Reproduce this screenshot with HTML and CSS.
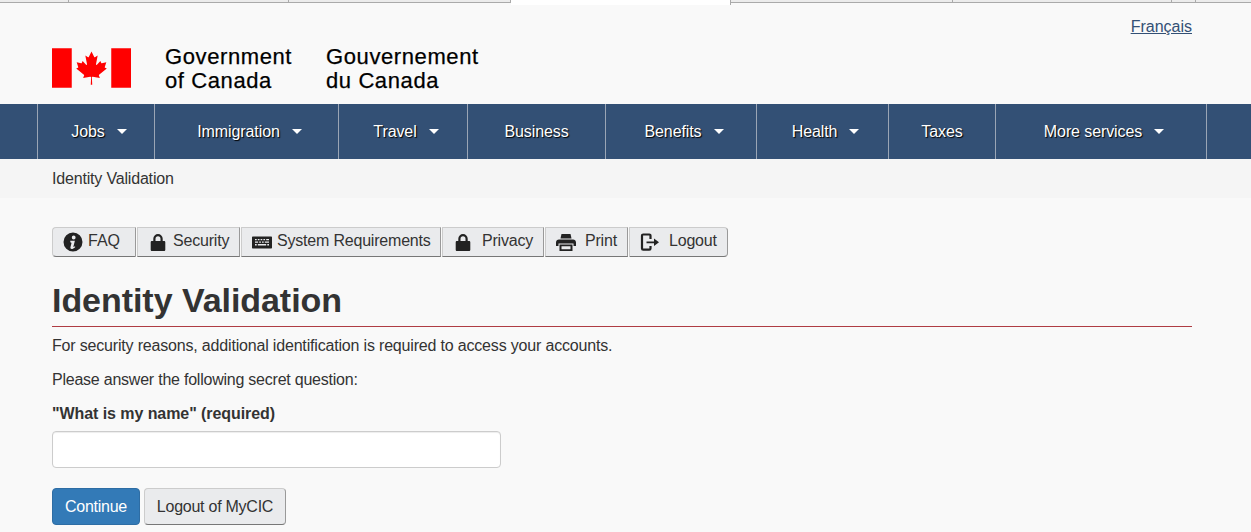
FILE: index.html
```html
<!DOCTYPE html>
<html lang="en">

<head>
    <meta charset="UTF-8">
    <meta name="viewport" content="width=device-width, initial-scale=1.0">
    <title>Identity Validation</title>
    <link rel="stylesheet" href="styles.css">
</head>

<body>
    <div class="tab-strip">
        <span class="strip-cell"></span>
        <span class="strip-cell"></span>
        <span class="strip-cell"></span>
        <span class="strip-active"></span>
        <span class="strip-cell"></span>
        <span class="strip-cell"></span>
        <span class="strip-cell"></span>
        <span class="strip-cell"></span>
    </div>

    <header class="site-header">
        <div class="lang-row"><a href="#">Français</a></div>
        <div class="brand">
            <svg class="flag" viewBox="0 0 9600 4800" aria-hidden="true">
                <path fill="#f00" d="M0 0h2400v4800H0zM7200 0h2400v4800H7200z" />
                <path fill="#f00" d="m4890 4430-45-863a95 95 0 0 1 111-98l859 151-116-320a65 65 0 0 1 20-73l941-762-212-99a65 65 0 0 1-34-79l186-572-542 115a65 65 0 0 1-73-38l-105-247-423 454a65 65 0 0 1-111-57l204-1052-327 189a65 65 0 0 1-91-27l-332-652-332 652a65 65 0 0 1-91 27l-327-189 204 1052a65 65 0 0 1-111 57l-423-454-105 247a65 65 0 0 1-73 38l-542-115 186 572a65 65 0 0 1-34 79l-212 99 941 762a65 65 0 0 1 20 73l-116 320 859-151a95 95 0 0 1 111 98l-45 863z" />
            </svg>
            <div class="brand-name brand-en">Government<br>of Canada</div>
            <div class="brand-name">Gouvernement<br>du Canada</div>
        </div>
    </header>

    <nav class="main-nav">
        <a class="nav-item nav-jobs" href="#">Jobs<span class="caret"></span></a>
        <a class="nav-item nav-immigration" href="#">Immigration<span class="caret"></span></a>
        <a class="nav-item nav-travel" href="#">Travel<span class="caret"></span></a>
        <a class="nav-item nav-business" href="#">Business</a>
        <a class="nav-item nav-benefits" href="#">Benefits<span class="caret"></span></a>
        <a class="nav-item nav-health" href="#">Health<span class="caret"></span></a>
        <a class="nav-item nav-taxes" href="#">Taxes</a>
        <a class="nav-item nav-more" href="#">More services<span class="caret"></span></a>
    </nav>

    <div class="breadcrumb">Identity Validation</div>

    <main class="content">
        <div class="toolbar">
            <a class="tool tool-faq" href="#">
                <svg class="icon" viewBox="0 0 20 20" aria-hidden="true">
                    <path fill-rule="evenodd" d="M10 .5a9.500 9.500 0 1 0 0 19 9.500 9.500 0 0 0 0-19zM10.700 3.600a1.900 1.900 0 1 1 0 3.800 1.900 1.900 0 0 1 0-3.800zM7.200 8.800h4.700l-1.500 5.800c-.1.500.4.500 1.500-.3l.4.600c-1.500 1.500-2.700 2-3.600 2-1 0-1.500-.7-1.200-1.900l1-3.900c.1-.6-.3-.8-1-.7z" />
                </svg>
                FAQ
            </a>
            <a class="tool tool-security" href="#">
                <svg class="icon" viewBox="0 0 20 20" aria-hidden="true">
                    <path d="M4 9h1.300V6.700a4.700 4.700 0 0 1 9.400 0V9H16c.8 0 1.300.5 1.300 1.300v7.400c0 .8-.5 1.300-1.300 1.300H4c-.8 0-1.300-.5-1.300-1.300v-7.400C2.700 9.500 3.200 9 4 9zM7.500 9h5V6.700a2.500 2.500 0 0 0-5 0z" fill-rule="evenodd" />
                </svg>
                Security
            </a>
            <a class="tool tool-system" href="#">
                <svg class="icon" viewBox="0 0 20 20" aria-hidden="true">
                    <path fill-rule="evenodd" d="M1 4.500h18c.6 0 1 .4 1 1v10c0 .6-.4 1-1 1H1c-.6 0-1-.4-1-1v-10c0-.6.4-1 1-1zM3 7v1.300h1.700V7zM5.800 7v1.300h1.700V7zM8.600 7v1.300h1.700V7zM11.400 7v1.300h1.700V7zM14.200 7v1.300h2.800V7zM3 9.500v1.300h3.100V9.500zM7.200 9.500v1.300h1.700V9.500zM10 9.500v1.300h1.700V9.500zM12.800 9.500v1.300H17V9.500zM3 12v1.500h1.700V12zM5.800 12v1.500h8.400V12zM15.300 12v1.500H17V12z" />
                </svg>
                System Requirements
            </a>
            <a class="tool tool-wide-gap tool-privacy" href="#">
                <svg class="icon" viewBox="0 0 20 20" aria-hidden="true">
                    <path d="M4 9h1.300V6.700a4.700 4.700 0 0 1 9.400 0V9H16c.8 0 1.300.5 1.300 1.300v7.400c0 .8-.5 1.300-1.300 1.300H4c-.8 0-1.300-.5-1.300-1.300v-7.400C2.700 9.500 3.200 9 4 9zM7.500 9h5V6.700a2.500 2.500 0 0 0-5 0z" fill-rule="evenodd" />
                </svg>
                Privacy
            </a>
            <a class="tool tool-wide-gap tool-print" href="#">
                <svg class="icon" viewBox="0 0 20 20" aria-hidden="true">
                    <path d="M5.500 2h9l1 4.500h-11z" />
                    <path d="M3 7.500h14c1.700 0 3 1.300 3 3V14h-2.500v-2.500h-15V14H0v-3.500c0-1.700 1.300-3 3-3z" />
                    <path fill-rule="evenodd" d="M3.500 12.500h13V19h-13zM5.500 14.300v2.900h9v-2.900z" />
                </svg>
                Print
            </a>
            <a class="tool tool-wide-gap tool-logout" href="#">
                <svg class="icon" viewBox="0 0 20 20" aria-hidden="true">
                    <path d="M10.500 7V3.700c0-.7-.5-1.200-1.200-1.200H3.200c-.7 0-1.200.5-1.200 1.200v12.800c0 .7.500 1.200 1.200 1.200h6.100c.7 0 1.200-.5 1.200-1.200V14" fill="none" stroke="#222" stroke-width="2.200" />
                    <path d="M6.500 9.400H14V6.500l5 3.800-5 3.800v-2.900H6.500z" />
                </svg>
                Logout
            </a>
        </div>

        <h1 class="page-title">Identity Validation</h1>
        <p class="line">For security reasons, additional identification is required to access your accounts.</p>
        <p class="line line-tight">Please answer the following secret question:</p>

        <form action="" method="post" class="question-form">
            <label for="secret">"What is my name" (required)</label>
            <input type="text" id="secret" name="secret">
            <div class="form-actions">
                <input class="btn btn-primary" type="submit" value="Continue">
                <input class="btn btn-default" type="button" value="Logout of MyCIC">
            </div>
        </form>
    </main>
</body>

</html>
```

FILE: styles.css
```css
html,
body {
    margin: 0;
    padding: 0;
}

body {
    background-color: #f9f9f9;
    color: #333;
    font-family: 'Liberation Sans', Arial, sans-serif;
    font-size: 16px;
    line-height: 23px;
    letter-spacing: -0.18px;
    overflow: hidden;
}

a {
    text-decoration: none;
    color: inherit;
}

/* browser tabs left over at the top of the capture */
.tab-strip {
    display: flex;
    height: 5px;
    background-color: #f9f9f9;
}

.strip-cell {
    height: 2px;
    background-color: #ececec;
    border-bottom: 1px solid #aaa;
    border-right: 1px solid #aaa;
}

.strip-cell:nth-child(1) { width: 68px; }
.strip-cell:nth-child(2) { width: 219px; }
.strip-cell:nth-child(3) { width: 221px; }
.strip-cell:nth-child(5) { width: 221px; }
.strip-cell:nth-child(6) { width: 218px; }
.strip-cell:nth-child(7) { width: 23px; }
.strip-cell:nth-child(8) { flex: 1; border-right: 0; }

.strip-active {
    width: 219px;
    height: 5px;
    background-color: #fff;
    border-right: 1px solid #aaa;
}

.site-header {
    height: 99px;
    padding: 0 59px 0 52px;
}

.lang-row {
    display: flex;
    justify-content: flex-end;
    padding-top: 10px;
    height: 33px;
    letter-spacing: 0;
}

.lang-row a {
    color: #335075;
    text-decoration: underline;
}

.brand {
    display: flex;
    align-items: flex-start;
}

.flag {
    display: block;
    width: 79px;
    height: 40px;
    margin-right: 34px;
}

.brand-name {
    margin-top: -3px;
    color: #000;
    font-size: 22px;
    line-height: 24px;
    letter-spacing: 0.6px;
    -webkit-text-stroke: 0.25px #000;
}

.brand-en {
    width: 161px;
}

.main-nav {
    display: flex;
    height: 55px;
    padding-left: 37px;
    background-color: #335075;
    letter-spacing: -0.1px;
}

.nav-item {
    display: flex;
    align-items: center;
    justify-content: center;
    box-sizing: border-box;
    color: #fff;
    text-shadow: 1px 1px 1px #000;
    border-left: 1px solid #9aa5b5;
}

.nav-item:last-child {
    border-right: 1px solid #9aa5b5;
}

.nav-jobs { width: 117px; }
.nav-immigration { width: 184px; }
.nav-travel { width: 129px; }
.nav-business { width: 138px; }
.nav-benefits { width: 151px; }
.nav-health { width: 132px; }
.nav-taxes { width: 107px; }
.nav-more { width: 212px; }

.caret {
    width: 0;
    height: 0;
    margin-left: 12px;
    margin-right: -6px;
    border-top: 5px solid #fff;
    border-left: 5px solid transparent;
    border-right: 5px solid transparent;
}

.breadcrumb {
    height: 39px;
    padding-left: 52px;
    line-height: 39px;
    background-color: #f5f5f5;
}

.content {
    padding: 29px 59px 0 52px;
}

.toolbar {
    display: flex;
    gap: 1px;
}

.tool {
    display: flex;
    align-items: center;
    box-sizing: border-box;
    height: 30px;
    padding: 0 0 3px 10px;
    letter-spacing: -0.2px;
    background-color: #eaebed;
    border: 1px solid #ccc;
    border-right-color: #999;
    border-bottom-color: #777;
}

.tool:first-child {
    border-radius: 4px 0 0 4px;
}

.tool:last-child {
    border-radius: 0 4px 4px 0;
}

.tool-faq { width: 84px; letter-spacing: 0; }
.tool-security { width: 103px; }
.tool-system { width: 200px; }
.tool-privacy { width: 102px; }
.tool-print { width: 83px; }
.tool-logout { width: 99px; }

.icon {
    flex: none;
    width: 20px;
    height: 20px;
    margin: 3px 5px 0 0;
    fill: #222;
}

.tool-wide-gap .icon {
    margin-right: 9px;
}

.page-title {
    margin: 24px 0 0;
    padding-bottom: 7px;
    color: #333;
    font-size: 34px;
    line-height: 38px;
    letter-spacing: -0.05px;
    border-bottom: 1px solid #af3c43;
}

.line {
    margin: 7px 0 11px;
}

.line-tight {
    letter-spacing: -0.23px;
}

.question-form label {
    display: block;
    margin-top: 11px;
    font-weight: bold;
    letter-spacing: -0.07px;
}

#secret {
    display: block;
    box-sizing: border-box;
    width: 449px;
    height: 37px;
    margin-top: 6px;
    background-color: #fff;
    border: 1px solid #ccc;
    border-radius: 4px;
    box-shadow: inset 0 1px 1px rgba(0, 0, 0, 0.075);
}

.form-actions {
    display: flex;
    gap: 4px;
    margin-top: 20px;
}

.btn {
    box-sizing: border-box;
    height: 37px;
    font-family: inherit;
    font-size: 16px;
    letter-spacing: -0.25px;
    border-radius: 4px;
    border: 1px solid;
    padding: 0;
}

.btn-primary {
    width: 88px;
    color: #fff;
    background-color: #337ab7;
    border-color: #2e6da4;
}

.btn-default {
    width: 142px;
    color: #333;
    background-color: #eaebed;
    border-color: #ccc #999 #777 #ccc;
}
```
